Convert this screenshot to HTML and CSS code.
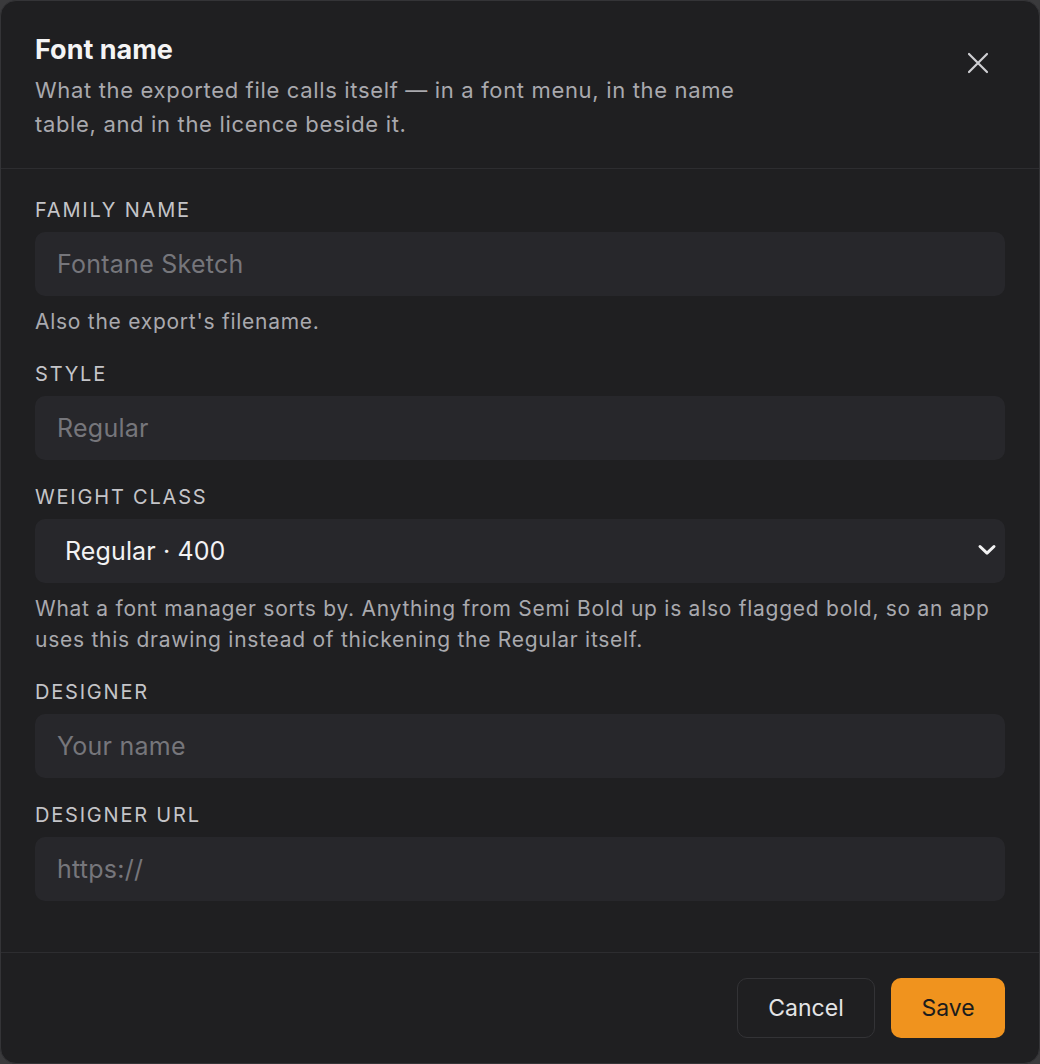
FILE: index.html
```html
<!DOCTYPE html>
<html lang="en">
<head>
<meta charset="utf-8">
<title>Font name</title>
<link rel="stylesheet" href="styles.css">
</head>
<body>
<div class="dialog" role="dialog" aria-labelledby="dlg-title">
  <header class="dlg-head">
    <div class="head-text">
      <h1 id="dlg-title" class="title">Font name</h1>
      <p class="desc">What the exported file calls itself — in a font menu, in the name table, and in the licence beside it.</p>
    </div>
    <button class="close" aria-label="Close">
      <svg width="22" height="22" viewBox="0 0 22 22"><path d="M2 2L20 20M20 2L2 20" stroke="currentColor" stroke-width="2.2" stroke-linecap="round" fill="none"/></svg>
    </button>
  </header>
  <div class="dlg-body">
    <div class="field">
      <label class="label" for="f-family">Family name</label>
      <input class="input" id="f-family" placeholder="Fontane Sketch">
      <p class="help">Also the export's filename.</p>
    </div>
    <div class="field">
      <label class="label" for="f-style">Style</label>
      <input class="input" id="f-style" placeholder="Regular">
    </div>
    <div class="field">
      <label class="label" for="f-weight">Weight class</label>
      <div class="select-wrap">
        <select class="select" id="f-weight">
          <option>Regular · 400</option>
        </select>
        <svg class="chev" width="20" height="12" viewBox="0 0 20 12"><path d="M3 2.5L10 9.2L17 2.5" stroke="currentColor" stroke-width="3" stroke-linecap="round" stroke-linejoin="round" fill="none"/></svg>
      </div>
      <p class="help">What a font manager sorts by. Anything from Semi Bold up is also flagged bold, so an app uses this drawing instead of thickening the Regular itself.</p>
    </div>
    <div class="field">
      <label class="label" for="f-designer">Designer</label>
      <input class="input" id="f-designer" placeholder="Your name">
    </div>
    <div class="field">
      <label class="label" for="f-url">Designer URL</label>
      <input class="input" id="f-url" placeholder="https://">
    </div>
  </div>
  <footer class="dlg-foot">
    <button class="btn btn-ghost">Cancel</button>
    <button class="btn btn-primary">Save</button>
  </footer>
</div>
</body>
</html>
```
FILE: styles.css
```css
* { box-sizing: border-box; }
html, body { margin: 0; padding: 0; }
body {
  background: #3a3a3c;
  font-family: Inter, "Noto Sans", sans-serif;
  color: #e6e6e8;
}
.dialog {
  height: 1064px;
  background: #1f1f21;
  border: 1px solid #343437;
  border-radius: 16px;
  display: flex;
  flex-direction: column;
  overflow: hidden;
}
.dlg-head {
  display: flex;
  justify-content: space-between;
  align-items: flex-start;
  padding: 33px 34px 27px 34px;
  border-bottom: 1px solid #2d2d30;
}
.head-text { max-width: 740px; }
.title {
  margin: 0;
  font-size: 27px;
  line-height: 32px;
  font-weight: 700;
  color: #f4f4f5;
}
.desc {
  margin: 7px 0 0 0;
  font-size: 22px;
  line-height: 34px;
  letter-spacing: 0.03em;
  color: #a9a9ae;
}
.close {
  background: none;
  border: 0;
  padding: 0;
  margin: 18px 16px 0 0;
  color: #cfcfd3;
  width: 22px;
  height: 22px;
  display: flex;
  cursor: pointer;
}
.dlg-body {
  flex: 1;
  padding: 28px 34px 0 34px;
  display: flex;
  flex-direction: column;
  gap: 24px;
}
.field { display: flex; flex-direction: column; }
.label {
  font-size: 20px;
  line-height: 26px;
  letter-spacing: 0.09em;
  text-transform: uppercase;
  color: #c4c4c8;
  margin-bottom: 9px;
}
.input, .select {
  height: 64px;
  width: 100%;
  border: 0;
  border-radius: 10px;
  background: #27272b;
  font-family: inherit;
  font-size: 25px;
  letter-spacing: 0.01em;
  color: #eeeeef;
  padding: 0 22px;
  outline: none;
}
.input::placeholder { color: #76767b; }
.select-wrap { position: relative; }
.select {
  appearance: none;
  -webkit-appearance: none;
  padding: 0 30px;
  letter-spacing: 0.005em;
  color: #f2f2f3;
}
.chev {
  position: absolute;
  right: 8px;
  top: 25px;
  color: #f2f2f3;
  pointer-events: none;
}
.help {
  margin: 10px 0 0 0;
  font-size: 21px;
  line-height: 31px;
  letter-spacing: 0.035em;
  color: #a9a9ae;
}
.dlg-foot {
  display: flex;
  justify-content: flex-end;
  gap: 16px;
  padding: 25px 34px 25px 34px;
  border-top: 1px solid #2d2d30;
}
.btn {
  height: 60px;
  border-radius: 10px;
  font-family: inherit;
  font-size: 23px;
  cursor: pointer;
}
.btn-ghost {
  width: 138px;
  background: transparent;
  border: 1px solid #333336;
  color: #e4e4e6;
}
.btn-primary {
  width: 114px;
  background: #f0931e;
  border: 0;
  color: #1c1c1c;
}
```
